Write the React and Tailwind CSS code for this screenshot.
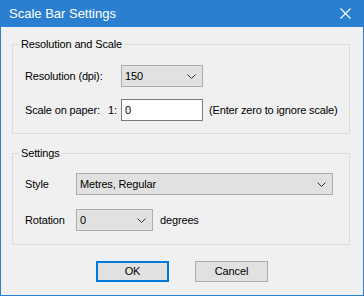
import React from 'react';

function Chevron() {
  return (
    <svg width="9" height="5" viewBox="0 0 9 5" className="shrink-0">
      <polyline points="0.5,0.5 4.5,4.5 8.5,0.5" fill="none" stroke="#333" strokeWidth="1" />
    </svg>
  );
}

function Combo({ value, className }) {
  return (
    <div className={`flex items-center justify-between h-[22px] bg-[#e1e1e1] border border-[#adadad] pl-[3px] pr-[6px] ${className}`}>
      <span>{value}</span>
      <Chevron />
    </div>
  );
}

function GroupBox({ title, className, children }) {
  return (
    <fieldset className={`ml-[11px] w-[338px] border border-[#dcdcdc] px-[12px] ${className}`}>
      <legend className="-ml-[6px] px-[2px] leading-[14px]">{title}</legend>
      {children}
    </fieldset>
  );
}

export default function App() {
  return (
    <div
      className="w-[364px] h-[296px] bg-[#f0f0f0] border-x border-b border-[#2b7fd0] text-[11px] tracking-[-0.15px] text-black flex flex-col whitespace-nowrap"
      style={{ fontFamily: '"Liberation Sans", Arial, sans-serif' }}
    >
      <div className="h-[27px] -mx-px bg-[#2b7fd0] flex items-center justify-between pl-[9px] pr-[13px] text-white">
        <span className="text-[13px] tracking-normal">Scale Bar Settings</span>
        <svg width="11" height="11" viewBox="0 0 11 11">
          <path d="M0.5 0.5 L10.5 10.5 M10.5 0.5 L0.5 10.5" stroke="#fff" strokeWidth="1.1" />
        </svg>
      </div>

      <GroupBox title="Resolution and Scale" className="mt-[10px] pb-[12px]">
        <div className="flex items-center mt-[14px]">
          <span className="w-[96px]">Resolution (dpi):</span>
          <Combo value="150" className="w-[82px]" />
        </div>
        <div className="flex items-center mt-[12px]">
          <span className="w-[83px]">Scale on paper:</span>
          <span className="w-[13px]">1:</span>
          <div className="w-[82px] h-[22px] bg-white border border-[#7a7a7a] pl-[3px] flex items-center">0</div>
          <span className="ml-[6px]">(Enter zero to ignore scale)</span>
        </div>
      </GroupBox>

      <GroupBox title="Settings" className="mt-[12px] pb-[13px]">
        <div className="flex items-center mt-[13px]">
          <span className="w-[51px]">Style</span>
          <Combo value="Metres, Regular" className="w-[257px]" />
        </div>
        <div className="flex items-center mt-[14px]">
          <span className="w-[51px]">Rotation</span>
          <Combo value="0" className="w-[77px]" />
          <span className="ml-[7px]">degrees</span>
        </div>
      </GroupBox>

      <div className="flex justify-center gap-[26px] mt-[16px]">
        <button className="w-[73px] h-[21px] bg-[#e1e1e1] border-2 border-[#0078d7]">OK</button>
        <button className="w-[73px] h-[21px] bg-[#e1e1e1] border border-[#adadad]">Cancel</button>
      </div>
    </div>
  );
}
